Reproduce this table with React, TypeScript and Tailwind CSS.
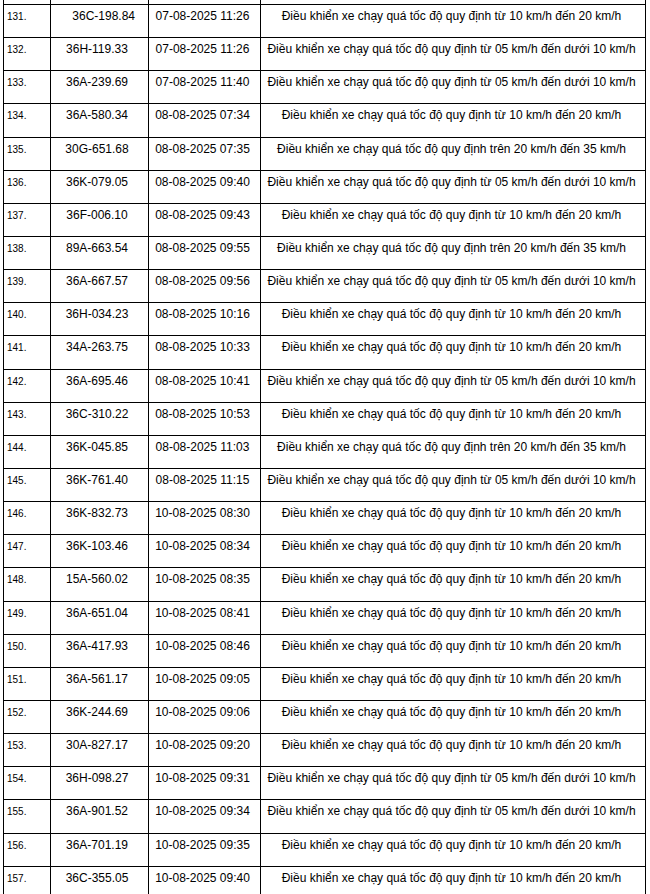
const A = "Điều khiển xe chạy quá tốc độ quy định từ 10 km/h đến 20 km/h";
const B = "Điều khiển xe chạy quá tốc độ quy định từ 05 km/h đến dưới 10 km/h";
const C = "Điều khiển xe chạy quá tốc độ quy định trên 20 km/h đến 35 km/h";

type Violation = {
  no: number;
  plate: string;
  time: string;
  desc: string;
};

const rows: Violation[] = [
  { no: 131, plate: "\u00a0\u00a0\u00a0\u00a036C-198.84", time: "07-08-2025 11:26", desc: A },
  { no: 132, plate: "36H-119.33", time: "07-08-2025 11:26", desc: B },
  { no: 133, plate: "36A-239.69", time: "07-08-2025 11:40", desc: B },
  { no: 134, plate: "36A-580.34", time: "08-08-2025 07:34", desc: A },
  { no: 135, plate: "30G-651.68", time: "08-08-2025 07:35", desc: C },
  { no: 136, plate: "36K-079.05", time: "08-08-2025 09:40", desc: B },
  { no: 137, plate: "36F-006.10", time: "08-08-2025 09:43", desc: A },
  { no: 138, plate: "89A-663.54", time: "08-08-2025 09:55", desc: C },
  { no: 139, plate: "36A-667.57", time: "08-08-2025 09:56", desc: B },
  { no: 140, plate: "36H-034.23", time: "08-08-2025 10:16", desc: A },
  { no: 141, plate: "34A-263.75", time: "08-08-2025 10:33", desc: A },
  { no: 142, plate: "36A-695.46", time: "08-08-2025 10:41", desc: B },
  { no: 143, plate: "36C-310.22", time: "08-08-2025 10:53", desc: A },
  { no: 144, plate: "36K-045.85", time: "08-08-2025 11:03", desc: C },
  { no: 145, plate: "36K-761.40", time: "08-08-2025 11:15", desc: B },
  { no: 146, plate: "36K-832.73", time: "10-08-2025 08:30", desc: A },
  { no: 147, plate: "36K-103.46", time: "10-08-2025 08:34", desc: A },
  { no: 148, plate: "15A-560.02", time: "10-08-2025 08:35", desc: A },
  { no: 149, plate: "36A-651.04", time: "10-08-2025 08:41", desc: A },
  { no: 150, plate: "36A-417.93", time: "10-08-2025 08:46", desc: A },
  { no: 151, plate: "36A-561.17", time: "10-08-2025 09:05", desc: A },
  { no: 152, plate: "36K-244.69", time: "10-08-2025 09:06", desc: A },
  { no: 153, plate: "30A-827.17", time: "10-08-2025 09:20", desc: A },
  { no: 154, plate: "36H-098.27", time: "10-08-2025 09:31", desc: B },
  { no: 155, plate: "36A-901.52", time: "10-08-2025 09:34", desc: B },
  { no: 156, plate: "36A-701.19", time: "10-08-2025 09:35", desc: A },
  { no: 157, plate: "36C-355.05", time: "10-08-2025 09:40", desc: A },
];

const gridCols = "grid grid-cols-[47px_98px_112px_385px]";

export default function App() {
  return (
    <div className="h-[894px] overflow-hidden bg-white font-['Liberation_Sans',Arial,sans-serif] text-black">
      <div className="ml-[3px] w-[643px] border-l border-black">
        {/* tail of the previous row, cut off by the page top */}
        <div className={`${gridCols} h-[5px]`}>
          <div className="border-r border-b border-black" />
          <div className="border-r border-b border-black" />
          <div className="border-r border-b border-black" />
          <div className="border-r border-b border-black" />
        </div>
        {rows.map((r) => (
          <div key={r.no} className={`${gridCols} h-[33.15px] leading-[15px]`}>
            <div className="border-r border-b border-black pl-[3px] pt-[4px] text-[10px]">
              {r.no}.
            </div>
            <div className="border-r border-b border-black pr-[5px] pt-[4px] text-center text-[12px] whitespace-nowrap">
              {r.plate}
            </div>
            <div className="border-r border-b border-black pr-[4px] pt-[4px] text-center text-[12px] whitespace-nowrap">
              {r.time}
            </div>
            <div className="border-r border-b border-black pr-[3px] pt-[4px] text-center text-[12px] whitespace-nowrap">
              {r.desc}
            </div>
          </div>
        ))}
      </div>
    </div>
  );
}
